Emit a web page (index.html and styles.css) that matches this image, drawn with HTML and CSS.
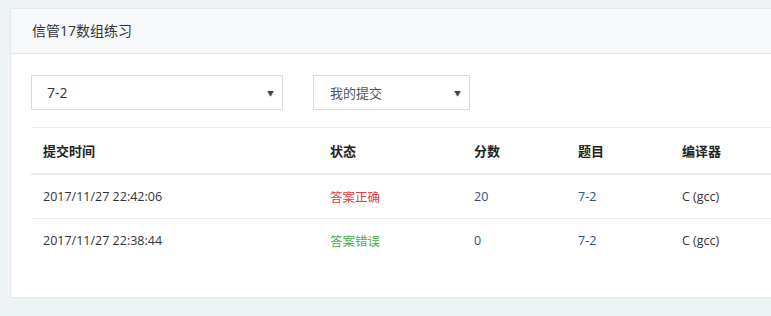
FILE: index.html
```html
<!DOCTYPE html>
<html>

<head>
    <title>信管17数组练习</title>
    <link rel="stylesheet" href="styles.css">
</head>

<body>
    <div class="card">
        <div class="card-header">信管17数组练习</div>

        <div class="card-body">
            <div class="filters">
                <div class="select select-problem">
                    <span>7-2</span>
                    <span class="caret">▼</span>
                </div>
                <div class="select select-scope">
                    <span>我的提交</span>
                    <span class="caret">▼</span>
                </div>
            </div>

            <table class="submissions">
                <colgroup>
                    <col class="col-time">
                    <col class="col-status">
                    <col class="col-score">
                    <col class="col-problem">
                    <col>
                </colgroup>
                <thead>
                    <tr>
                        <th>提交时间</th>
                        <th>状态</th>
                        <th>分数</th>
                        <th>题目</th>
                        <th>编译器</th>
                    </tr>
                </thead>
                <tbody>
                    <tr>
                        <td>2017/11/27 22:42:06</td>
                        <td class="accepted">答案正确</td>
                        <td class="link">20</td>
                        <td class="link">7-2</td>
                        <td>C (gcc)</td>
                    </tr>
                    <tr>
                        <td>2017/11/27 22:38:44</td>
                        <td class="wrong">答案错误</td>
                        <td class="link">0</td>
                        <td class="link">7-2</td>
                        <td>C (gcc)</td>
                    </tr>
                </tbody>
            </table>
        </div>
    </div>
</body>

</html>
```

FILE: styles.css
```css
body {
    font-family: "Open Sans", "Noto Sans CJK SC", sans-serif;
    font-size: 13px;
    color: #333;
    background-color: #eef3f6;
    margin: 0;
    padding: 8px 0 0 10px;
    overflow: hidden;
}

.card {
    width: 820px;
    background-color: #fff;
    border: 1px solid #e4e9ec;
    box-shadow: 0 1px 2px rgba(0, 0, 0, 0.04);
}

.card-header {
    height: 44px;
    line-height: 44px;
    padding-left: 21px;
    font-size: 14px;
    color: #333;
    background-color: #f7f8fa;
    border-bottom: 1px solid #e2e5e8;
}

.card-body {
    padding: 21px 20px 35px 20px;
}

.filters {
    display: flex;
    gap: 30px;
    padding-bottom: 17px;
    border-bottom: 1px solid #eceef0;
}

.select {
    height: 33px;
    display: flex;
    align-items: center;
    justify-content: space-between;
    border: 1px solid #d9dcdf;
    background-color: #fff;
    box-sizing: content-box;
}

.select-problem {
    width: 250px;
    font-size: 14px;
}

.select-problem span:first-child {
    padding-left: 15px;
}

.select-scope {
    width: 155px;
    font-size: 13px;
    color: #555;
}

.select-scope span:first-child {
    padding-left: 16px;
}

.caret {
    font-size: 7px;
    color: #444;
    padding-right: 8px;
}

.submissions {
    width: 100%;
    table-layout: fixed;
    border-collapse: collapse;
}

.col-time {
    width: 287px;
}

.col-status {
    width: 144px;
}

.col-score,
.col-problem {
    width: 104px;
}

.submissions th {
    text-align: left;
    font-weight: bold;
    height: 45px;
    padding: 0 12px;
    color: #222;
    border-bottom: 2px solid #e8eaec;
}

.submissions td {
    height: 43px;
    padding: 0 12px;
    font-size: 12.5px;
    border-bottom: 1px solid #eceef0;
}

.submissions tbody tr:last-child td {
    border-bottom: none;
}

.accepted {
    color: #e0403d;
}

.wrong {
    color: #4aae4a;
}

.link {
    color: #2b5082;
}
```
